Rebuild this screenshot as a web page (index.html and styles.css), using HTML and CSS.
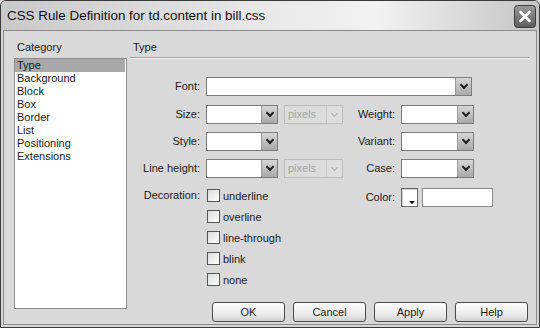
FILE: index.html
```html
<!DOCTYPE html>
<html>
  <head>
    <title>CSS Rule Definition</title>
    <link rel="stylesheet" href="styles.css">
  </head>
  <body>
    <div class="dialog">
      <div class="titlebar">
        <span class="title">CSS Rule Definition for td.content in bill.css</span>
        <span class="close">
          <svg width="22" height="23" viewBox="0 0 22 23">
            <defs>
              <linearGradient id="cg" x1="0" y1="0" x2="0" y2="1">
                <stop offset="0" stop-color="#9a9a9a"/>
                <stop offset="1" stop-color="#5c5c5c"/>
              </linearGradient>
            </defs>
            <rect x="0.5" y="0.5" width="21" height="22" rx="3" fill="url(#cg)" stroke="#3c3c3c"/>
            <path d="M6.5 7 L15.5 16 M15.5 7 L6.5 16" stroke="#fff" stroke-width="2.6" stroke-linecap="round"/>
          </svg>
        </span>
      </div>

      <div class="body">
        <div class="category">
          <div class="caption">Category</div>
          <ul class="list">
            <li class="selected">Type</li>
            <li>Background</li>
            <li>Block</li>
            <li>Box</li>
            <li>Border</li>
            <li>List</li>
            <li>Positioning</li>
            <li>Extensions</li>
          </ul>
        </div>

        <div class="panel">
          <div class="panel-title">Type</div>

          <div class="form">
            <label class="lbl">Font:</label>
            <div class="select wide"><span class="value"></span><span class="arrow"></span></div>

            <label class="lbl">Size:</label>
            <div class="select"><span class="value"></span><span class="arrow"></span></div>
            <div class="select disabled"><span class="value">pixels</span><span class="arrow"></span></div>
            <label class="lbl">Weight:</label>
            <div class="select"><span class="value"></span><span class="arrow"></span></div>

            <label class="lbl">Style:</label>
            <div class="select"><span class="value"></span><span class="arrow"></span></div>
            <div></div>
            <label class="lbl">Variant:</label>
            <div class="select"><span class="value"></span><span class="arrow"></span></div>

            <label class="lbl">Line height:</label>
            <div class="select"><span class="value"></span><span class="arrow"></span></div>
            <div class="select disabled"><span class="value">pixels</span><span class="arrow"></span></div>
            <label class="lbl">Case:</label>
            <div class="select"><span class="value"></span><span class="arrow"></span></div>

            <label class="lbl top">Decoration:</label>
            <div class="checks">
              <div class="check"><span class="box"></span>underline</div>
              <div class="check"><span class="box"></span>overline</div>
              <div class="check"><span class="box"></span>line-through</div>
              <div class="check"><span class="box"></span>blink</div>
              <div class="check"><span class="box"></span>none</div>
            </div>
            <label class="lbl top color-lbl">Color:</label>
            <div class="color">
              <span class="swatch"></span>
              <span class="text-input"></span>
            </div>
          </div>

          <div class="buttons">
            <button>OK</button>
            <button>Cancel</button>
            <button>Apply</button>
            <button>Help</button>
          </div>
        </div>
      </div>
    </div>
  </body>
</html>
```

FILE: styles.css
```css
body {
  margin: 0;
  font-family: "Liberation Sans", Arial, sans-serif;
  font-size: 11px;
  color: #1a1a1a;
  background: #d9d9d9;
}
.dialog {
  width: 540px;
  height: 328px;
  box-sizing: border-box;
  border: 1px solid #3a3a3a;
  border-radius: 6px 6px 0 0;
  padding: 0 2px 2px 2px;
  background: #d6d6d6;
  display: flex;
  flex-direction: column;
}
.titlebar {
  height: 29px;
  margin: 0 -2px;
  padding: 0 3px 0 6px;
  display: flex;
  align-items: center;
  justify-content: space-between;
  border-radius: 5px 5px 0 0;
  background: linear-gradient(to right, #c9c9c9, #e6e6e6 45%, #f2f2f2 70%, #c4c4c4);
}
.title {
  font-size: 13.4px;
  color: #111;
  padding-bottom: 1px;
}
.close {
  display: flex;
  margin-top: 1px;
}
.body {
  flex: 1;
  display: flex;
  border: 1px solid #8a8a8a;
  padding: 10px 7px 2px 10px;
  background: #d9d9d9;
}
.category {
  width: 113px;
  margin-right: 3px;
}
.caption {
  height: 13px;
  line-height: 13px;
  padding-left: 3px;
  margin-bottom: 4px;
}
.list {
  list-style: none;
  margin: 0;
  padding: 0;
  height: 251px;
  box-sizing: border-box;
  border: 1px solid #8c8c8c;
  background: #fff;
}
.list li {
  height: 13px;
  line-height: 13px;
  padding-left: 2px;
  margin-right: 1px;
}
.list li.selected {
  background: #a9a9a9;
}
.panel {
  flex: 1;
  display: flex;
  flex-direction: column;
}
.panel-title {
  height: 13px;
  line-height: 13px;
  padding: 0 0 3px 3px;
  border-bottom: 1px solid #a3a3a3;
  box-shadow: 0 1px 0 #f4f4f4;
}
.form {
  margin-top: 19px;
  display: grid;
  grid-template-columns: 70px 72px 59px 46px 73px;
  grid-auto-rows: auto;
  column-gap: 6px;
  row-gap: 8px;
}
.lbl {
  height: 19px;
  line-height: 19px;
  text-align: right;
  white-space: nowrap;
}
.select {
  height: 19px;
  box-sizing: border-box;
  border: 1px solid #7c7c7c;
  background: #fff;
  display: flex;
}
.select.wide {
  grid-column: 2 / -1;
  margin-right: 2px;
  margin-bottom: 1px;
}
.select .value {
  flex: 1;
  line-height: 17px;
  padding-left: 3px;
}
.select .arrow {
  width: 15px;
  border-left: 1px solid #9a9a9a;
  background: linear-gradient(#d6d6d6, #a9a9a9);
  display: flex;
  align-items: center;
  justify-content: center;
}
.select .arrow::after {
  content: "";
  width: 4px;
  height: 4px;
  border-right: 2px solid #202020;
  border-bottom: 2px solid #202020;
  transform: rotate(45deg);
  margin-top: -3px;
}
.select.disabled {
  border-color: #bdbdbd;
  background: #dcdcdc;
  color: #a6a6a6;
}
.select.disabled .arrow {
  border-left-color: #c8c8c8;
  background: #dedede;
}
.select.disabled .arrow::after {
  border-color: #b0b0b0;
  border-width: 0 1px 1px 0;
}
.top {
  align-self: start;
}
.checks {
  grid-column: 2 / 4;
  display: flex;
  flex-direction: column;
  gap: 2px;
}
.check {
  height: 19px;
  display: flex;
  align-items: center;
  gap: 3px;
  margin-left: 1px;
}
.box {
  width: 13px;
  height: 13px;
  box-sizing: border-box;
  border: 1px solid #555;
  background: linear-gradient(135deg, #dcdcdc, #fff);
}
.color-lbl {
  margin-top: 2px;
}
.color {
  display: flex;
  gap: 4px;
  margin-top: 2px;
  align-self: start;
  width: max-content;
}
.swatch {
  position: relative;
  flex-shrink: 0;
  width: 17px;
  height: 19px;
  box-sizing: border-box;
  border: 1px solid #6a6a6a;
  background: #fff;
  box-shadow: inset 1px 1px 0 #cfcfcf;
}
.swatch::after {
  content: "";
  position: absolute;
  right: 2px;
  bottom: 2px;
  border-left: 3px solid transparent;
  border-right: 3px solid transparent;
  border-top: 3px solid #000;
}
.text-input {
  flex-shrink: 0;
  width: 71px;
  height: 19px;
  box-sizing: border-box;
  border: 1px solid #8a8a8a;
  background: #fff;
}
.buttons {
  margin-top: auto;
  display: flex;
  justify-content: flex-end;
  gap: 8px;
  padding-right: 1px;
}
.buttons button {
  width: 73px;
  height: 20px;
  padding: 0;
  font-family: inherit;
  font-size: 11px;
  color: #1a1a1a;
  border: 1px solid #4c4c4c;
  border-radius: 3px;
  background: linear-gradient(#fdfdfd, #ececec 60%, #d2d2d2);
}
```
